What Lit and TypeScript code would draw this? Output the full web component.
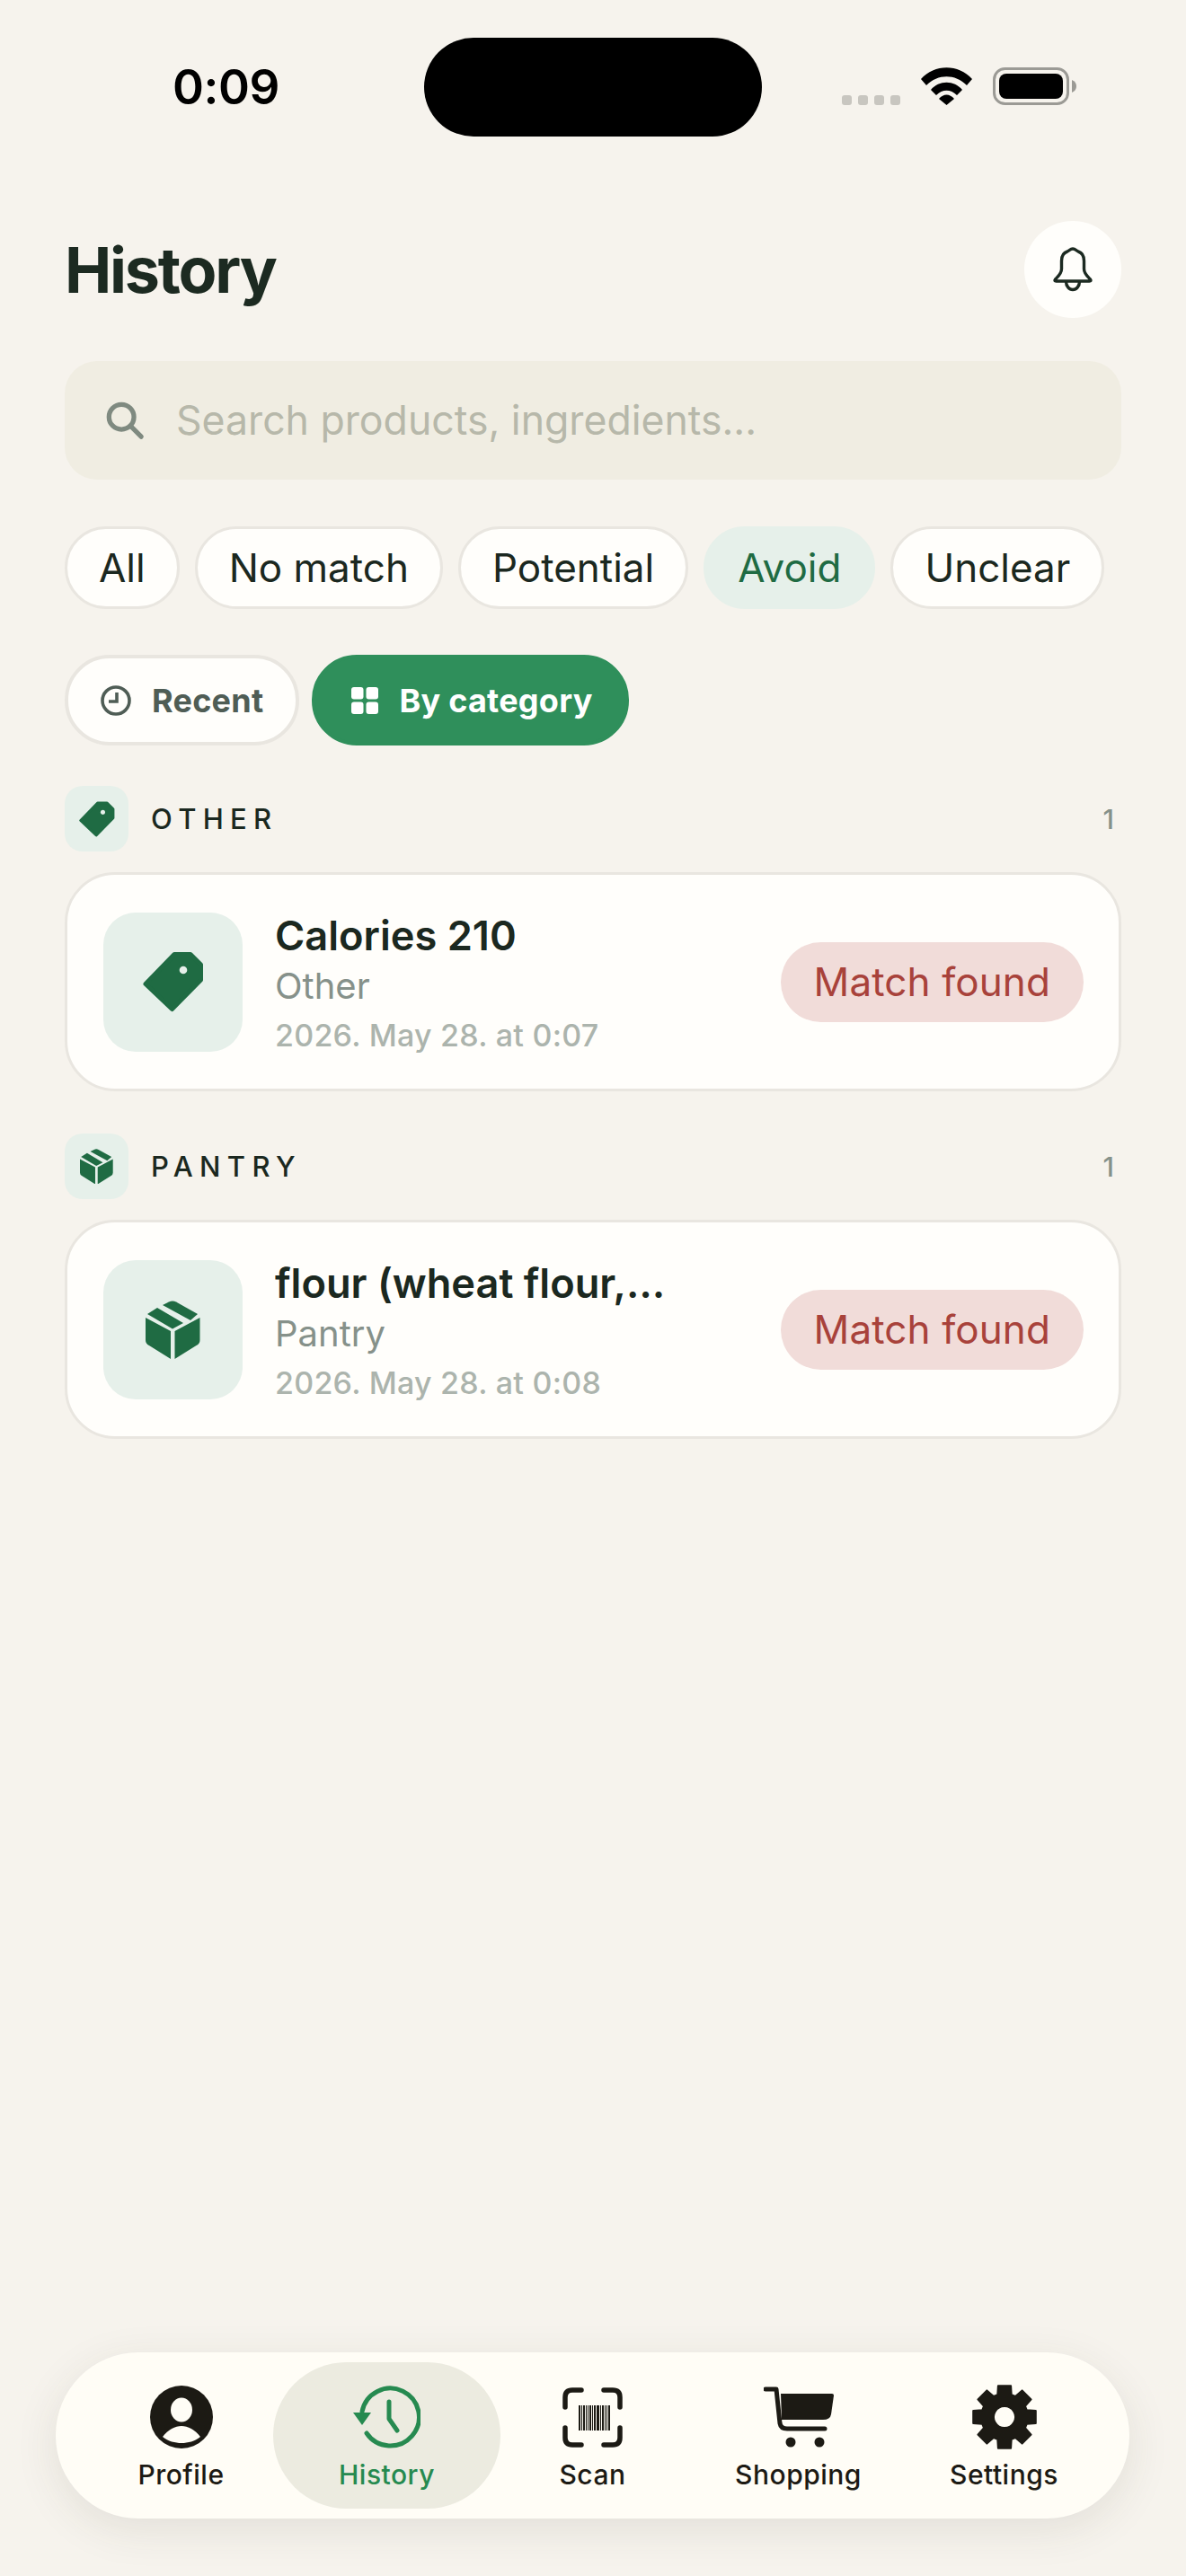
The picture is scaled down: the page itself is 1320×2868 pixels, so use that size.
import { LitElement, html, css, svg } from 'lit';
import { customElement } from 'lit/decorators.js';

const tagIcon = (size: number) => html`
  <svg width=${size} height=${size} viewBox="0 0 68 68">
    <path fill="#1f6b43" stroke="#1f6b43" stroke-width="5" stroke-linejoin="round"
      d="M35 3.500H53L64.500 15V32L32.500 64.500L3 36.500Z" />
    <circle cx="45" cy="21" r="4.300" fill="#e6f0ea" />
  </svg>`;

const boxIcon = (size: number) => html`
  <svg width=${size} height=${size * 65 / 61} viewBox="0 0 61 65">
    <g fill="#1f6b43">
      <path d="M0 19L28 34V65L4 50Q0 48 0 44Z" />
      <path d="M60.500 19L32.500 34V65L56.500 50Q60.500 48 60.500 44Z" />
      <path d="M2 15L13 8L42 25L30 31.500Z" />
      <path d="M19 5L26 1.500Q30 -.5 34 1.500L58 15L50 22Z" />
    </g>
  </svg>`;

const gearPath = () => {
  const cx = 36;
  const cy = 36;
  const pts: string[] = [];
  for (let i = 0; i < 8; i++) {
    const a = (i * Math.PI) / 4 - Math.PI / 2;
    const p = (r: number, da: number) =>
      `${(cx + r * Math.cos(a + da)).toFixed(1)} ${(cy + r * Math.sin(a + da)).toFixed(1)}`;
    pts.push(`${i === 0 ? 'M' : 'L'}${p(26, -0.3)}`, `L${p(35.5, -0.2)}`, `L${p(35.5, 0.2)}`, `L${p(26, 0.3)}`);
  }
  return `${pts.join(' ')} Z M36 24a12 12 0 1 0 .01 0Z`;
};

const barWidths = [2, 1, 2, 1, 1, 2, 1, 2, 3, 1, 2, 1, 1, 2];

const navIcons: Record<string, unknown> = {
  Profile: html`
    <svg width="70" height="70" viewBox="0 0 70 70">
      <circle cx="35" cy="35" r="35" fill="#1c1a14" />
      <ellipse cx="35" cy="27" rx="12" ry="13.5" fill="#fffdf6" />
      <path fill="#fffdf6" d="M14 57C20 49 28 45 35 45C42 45 50 49 56 57C50 62 42 64 35 64C28 64 20 62 14 57Z" />
    </svg>`,
  History: html`
    <svg width="75" height="70" viewBox="0 0 75 70">
      <g fill="none" stroke="#268a50" stroke-width="5" stroke-linecap="round" stroke-linejoin="round">
        <path d="M10 29A32 32 0 1 1 15 53" />
        <path d="M40 18V37L49 50" />
      </g>
      <path fill="#268a50" d="M0 30H20L10 44Z" />
    </svg>`,
  Scan: html`
    <svg width="67" height="67" viewBox="0 0 67 67">
      <g fill="none" stroke="#1c1a14" stroke-width="5.5" stroke-linecap="round">
        <path d="M3 22V11Q3 3 11 3H21" />
        <path d="M46 3H56Q64 3 64 11V22" />
        <path d="M3 45V56Q3 64 11 64H21" />
        <path d="M64 45V56Q64 64 56 64H46" />
      </g>
      ${barWidths.map((w, i) => {
        const x = 18 + barWidths.slice(0, i).reduce((s, v) => s + v + 1, 0);
        return svg`<rect x=${x} y="20" width=${w} height="28" fill="#1c1a14" />`;
      })}
    </svg>`,
  Shopping: html`
    <svg width="78" height="68" viewBox="0 0 78 68">
      <path fill="none" stroke="#1c1a14" stroke-width="5" stroke-linecap="round" stroke-linejoin="round"
        d="M2 3H14L18 41Q19 47 26 47H68" />
      <path fill="#1c1a14" d="M19 8H76Q78 8 78 10L75 31Q74 37 66 37H20Z" />
      <circle cx="30" cy="62" r="5.5" fill="#1c1a14" />
      <circle cx="62" cy="62" r="5.5" fill="#1c1a14" />
    </svg>`,
  Settings: html`
    <svg width="72" height="72" viewBox="0 0 72 72">
      <path fill="#1c1a14" fill-rule="evenodd" stroke="#1c1a14" stroke-width="2" stroke-linejoin="round" d=${gearPath()} />
    </svg>`,
};

@customElement('app-root')
export class AppRoot extends LitElement {
  static styles = css`
    :host {
      display: flex;
      flex-direction: column;
      min-height: 2868px;
      box-sizing: border-box;
      background: #f6f3ed;
      font-family: Inter, 'Liberation Sans', sans-serif;
      color: #1b2820;
    }

    .status {
      display: flex;
      align-items: center;
      height: 110px;
      margin-top: 42px;
      padding-left: 192px;
    }

    .time {
      width: 280px;
      font-size: 53px;
      font-weight: 600;
      letter-spacing: -0.4px;
      color: #000;
      line-height: 1;
    }

    .island {
      width: 376px;
      height: 110px;
      border-radius: 55px;
      background: #000;
    }

    .signal {
      display: flex;
      gap: 7px;
      margin-left: 89px;
      margin-top: 29px;
    }

    .signal i {
      width: 11px;
      height: 11px;
      border-radius: 3px;
      background: #c8c6c0;
    }

    .wifi {
      margin-left: 23px;
      margin-top: -2px;
    }

    .battery {
      margin-left: 23px;
      margin-top: -2px;
    }

    main {
      display: flex;
      flex-direction: column;
      padding: 0 72px;
    }

    header {
      display: flex;
      align-items: center;
      justify-content: space-between;
      margin-top: 94px;
      height: 108px;
    }

    h1 {
      margin: 0;
      font-size: 70px;
      font-weight: 700;
      letter-spacing: -2.2px;
      color: #1c2a21;
    }

    .bell {
      display: flex;
      align-items: center;
      justify-content: center;
      width: 108px;
      height: 108px;
      border-radius: 50%;
      background: #fffefb;
    }

    .search {
      display: flex;
      align-items: center;
      gap: 35px;
      height: 132px;
      margin-top: 48px;
      padding-left: 45px;
      border-radius: 36px;
      background: #f0ede2;
      font-size: 44.6px;
      color: #b7b8aa;
    }

    .chips {
      display: flex;
      gap: 17px;
      margin-top: 52px;
    }

    .chip {
      height: 92px;
      box-sizing: border-box;
      padding: 0 35px;
      display: flex;
      align-items: center;
      border: 3px solid #e9e6e0;
      border-radius: 46px;
      background: #fffefb;
      font-size: 44px;
    }

    .chip.active {
      border-color: #e6f0ea;
      background: #e6f0ea;
      color: #1f6b43;
    }

    .modes {
      display: flex;
      gap: 14px;
      margin-top: 51px;
    }

    .mode {
      display: flex;
      align-items: center;
      gap: 23px;
      height: 101px;
      box-sizing: border-box;
      padding: 0 36px;
      border: 4px solid #e9e6e0;
      border-radius: 50px;
      background: #fffefb;
      font-size: 36px;
      font-weight: 700;
      letter-spacing: 0.25px;
      color: #4f5d55;
    }

    .mode.active {
      padding-left: 40px;
      border-color: #2f8f5b;
      background: #2f8f5b;
      color: #fff;
    }

    .section {
      display: flex;
      align-items: center;
      gap: 25px;
      height: 73px;
      margin-top: 45px;
    }

    .card + .section {
      margin-top: 47px;
    }

    .section-icon {
      display: flex;
      align-items: center;
      justify-content: center;
      width: 71px;
      height: 73px;
      border-radius: 20px;
      background: #e6f0ea;
    }

    .section-name {
      flex: 1;
      font-size: 31px;
      font-weight: 500;
      letter-spacing: 7.3px;
    }

    .section-count {
      margin-right: 8px;
      font-size: 30px;
      font-weight: 500;
      color: #86918a;
    }

    .card {
      display: flex;
      align-items: center;
      height: 244px;
      box-sizing: border-box;
      margin-top: 23px;
      padding: 0 39px 0 40px;
      border: 3px solid #e9e6e0;
      border-radius: 56px;
      background: #fffefb;
    }

    .card-icon {
      display: flex;
      align-items: center;
      justify-content: center;
      width: 155px;
      height: 155px;
      border-radius: 36px;
      background: #e6f0ea;
    }

    .card-text {
      flex: 1;
      display: flex;
      flex-direction: column;
      margin-left: 36px;
      padding-top: 4px;
    }

    .card-title {
      font-size: 45.2px;
      font-weight: 600;
      line-height: 56px;
    }

    .card-cat {
      font-size: 40px;
      line-height: 56px;
      color: #86918a;
    }

    .card-date {
      margin-top: 4px;
      font-size: 34px;
      font-weight: 500;
      line-height: 46px;
      letter-spacing: 0.25px;
      color: #acb4ad;
    }

    .badge {
      display: flex;
      align-items: center;
      height: 89px;
      padding: 0 37px;
      border-radius: 45px;
      background: #f1dcd9;
      font-size: 44px;
      letter-spacing: 0.1px;
      color: #a8423b;
    }

    nav {
      display: grid;
      grid-template-columns: repeat(5, 229px);
      height: 185px;
      box-sizing: border-box;
      margin: auto 63px 64px 62px;
      padding: 0 25px;
      border-radius: 92px;
      background: #fffdf6;
      box-shadow: 0 12px 48px rgba(60, 55, 40, 0.1);
    }

    .tab {
      position: relative;
      display: flex;
      flex-direction: column;
      align-items: center;
      font-size: 30px;
      font-weight: 500;
      letter-spacing: 0.5px;
      color: #1c1a14;
    }

    .tab.active {
      color: #268a50;
    }

    .tab.active::before {
      content: '';
      position: absolute;
      top: 11px;
      left: -12px;
      right: -12px;
      height: 163px;
      border-radius: 82px;
      background: #ecebe0;
    }

    .tab-icon {
      position: relative;
      display: flex;
      align-items: center;
      justify-content: center;
      height: 72px;
      margin-top: 36px;
    }

    .tab-label {
      position: relative;
      margin-top: 10px;
      line-height: 36px;
    }
  `;

  private _section(icon: unknown, name: string) {
    return html`
      <div class="section">
        <div class="section-icon">${icon}</div>
        <div class="section-name">${name}</div>
        <div class="section-count">1</div>
      </div>
    `;
  }

  private _card(icon: unknown, title: string, cat: string, date: string) {
    return html`
      <div class="card">
        <div class="card-icon">${icon}</div>
        <div class="card-text">
          <div class="card-title">${title}</div>
          <div class="card-cat">${cat}</div>
          <div class="card-date">${date}</div>
        </div>
        <div class="badge">Match found</div>
      </div>
    `;
  }

  render() {
    const chips = ['All', 'No match', 'Potential', 'Avoid', 'Unclear'];
    const tabs = ['Profile', 'History', 'Scan', 'Shopping', 'Settings'];
    return html`
      <div class="status">
        <div class="time">0:09</div>
        <div class="island"></div>
        <div class="signal"><i></i><i></i><i></i><i></i></div>
        <svg class="wifi" width="57" height="42" viewBox="0 0 57 42">
          <path d="M0 13C15-4 42-4 57 13L51 20C38 7 19 7 6 20Z" />
          <path d="M11 25C20 14 37 14 46 25L40 31C33 24 24 24 17 31Z" />
          <path d="M20 35C25 29 32 29 37 35L28.5 42Z" />
        </svg>
        <svg class="battery" width="93" height="42" viewBox="0 0 93 42">
          <rect x="1.5" y="1.5" width="82" height="39" rx="12" fill="none" stroke="#9b9a95" stroke-width="3" />
          <rect x="7" y="7" width="71" height="28" rx="8" fill="#000" />
          <path fill="#9b9a95" d="M88 14Q93 16 93 21Q93 26 88 28Z" />
        </svg>
      </div>
      <main>
        <header>
          <h1>History</h1>
          <div class="bell">
            <svg width="46" height="50" viewBox="0 0 46 50" fill="none" stroke="#1c2a21" stroke-width="3.4" stroke-linejoin="round">
              <path d="M23 2C20 2 19.500 4 17 5C12 6.500 10.500 10.500 10.500 15.500V24.500C10.500 29.500 7 32.500 3.500 36Q2 38 4.500 38H41.500Q44 38 42.500 36C39 32.500 35.500 29.500 35.500 24.500V15.500C35.500 10.500 34 6.500 29 5C26.500 4 26 2 23 2Z" />
              <path d="M15.500 38.500A7.500 9 0 0 0 30.500 38.500" />
            </svg>
          </div>
        </header>
        <div class="search">
          <svg width="44" height="44" viewBox="0 0 46 46" fill="none" stroke="#7f8a80" stroke-width="5.500" stroke-linecap="round">
            <circle cx="19" cy="19" r="14.500" />
            <path d="M30 30L42 42" />
          </svg>
          <span>Search products, ingredients...</span>
        </div>
        <div class="chips">
          ${chips.map((c) => html`<div class="chip ${c === 'Avoid' ? 'active' : ''}">${c}</div>`)}
        </div>
        <div class="modes">
          <div class="mode">
            <svg width="34" height="34" viewBox="0 0 34 34" fill="none" stroke="#4f5d55" stroke-width="3.600">
              <circle cx="17" cy="17" r="15" />
              <path d="M18 8V18H9" />
            </svg>
            Recent
          </div>
          <div class="mode active">
            <svg width="30" height="30" viewBox="0 0 30 30" fill="#fff">
              <rect width="13.500" height="13.500" rx="3" />
              <rect x="16.500" width="13.500" height="13.500" rx="3" />
              <rect y="16.500" width="13.500" height="13.500" rx="3" />
              <rect x="16.500" y="16.500" width="13.500" height="13.500" rx="3" />
            </svg>
            By category
          </div>
        </div>
        ${this._section(tagIcon(40), 'OTHER')}
        ${this._card(tagIcon(68), 'Calories 210', 'Other', '2026. May 28. at 0:07')}
        ${this._section(boxIcon(37), 'PANTRY')}
        ${this._card(boxIcon(61), 'flour (wheat flour,…', 'Pantry', '2026. May 28. at 0:08')}
      </main>
      <nav>
        ${tabs.map(
          (t) => html`
            <div class="tab ${t === 'History' ? 'active' : ''}">
              <div class="tab-icon">${navIcons[t]}</div>
              <div class="tab-label">${t}</div>
            </div>
          `
        )}
      </nav>
    `;
  }
}
